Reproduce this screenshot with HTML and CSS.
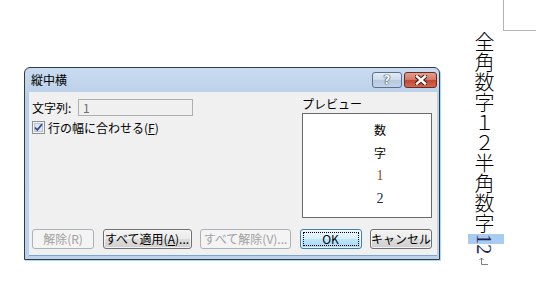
FILE: index.html
```html
<!DOCTYPE html>
<html lang="ja">
<head>
    <meta charset="UTF-8">
    <title>縦中横</title>
    <link rel="stylesheet" href="styles.css">
</head>
<body>
    <div class="doc">
        <div class="column">全角数字１２半角数字<span class="latin"><span class="sel">1</span>2</span><svg class="para" width="10" height="9" viewBox="0 0 10 9"><path d="M2.5 1 V7.5 H9 M0.5 3 L2.5 1 L4.5 3" fill="none" stroke="#808080" stroke-width="1"/></svg></div>
        <div class="corner"></div>
    </div>

    <div class="dialog">
        <div class="titlebar">
            <span class="title">縦中横</span>
            <div class="caption-btns">
                <span class="cap-btn help">?</span>
                <span class="cap-btn close">
                    <svg width="12" height="10" viewBox="0 0 12 10"><path d="M2 1.5 L10 8.5 M10 1.5 L2 8.5" stroke="#4a1410" stroke-width="4.5" stroke-linecap="square"/><path d="M2 1.5 L10 8.5 M10 1.5 L2 8.5" stroke="#fff" stroke-width="2.5" stroke-linecap="square"/></svg>
                </span>
            </div>
        </div>
        <div class="client">
            <div class="main">
                <div class="options">
                    <div class="field-row">
                        <label for="chars">文字列:</label>
                        <input type="text" id="chars" value="1" disabled>
                    </div>
                    <div class="check-row">
                        <svg class="checkbox" width="13" height="13" viewBox="0 0 13 13">
                            <rect x="0.5" y="0.5" width="12" height="12" fill="#f4f4f4" stroke="#8e8f8f"/>
                            <rect x="2.5" y="2.5" width="8" height="8" fill="#dfe5ee" stroke="#b9c3d3"/>
                            <path d="M3 6.5 L5.3 9 L10 3.3" fill="none" stroke="#32478a" stroke-width="1.8"/>
                        </svg>
                        <span>行の幅に合わせる(<u>F</u>)</span>
                    </div>
                </div>
                <div class="preview">
                    <div class="preview-label">プレビュー</div>
                    <div class="preview-box">
                        <div class="preview-col">
                            <span>数</span>
                            <span>字</span>
                            <span class="digit one">1</span>
                            <span class="digit two">2</span>
                        </div>
                    </div>
                </div>
            </div>
            <div class="buttons">
                <span class="btn disabled w-62">解除(R)</span>
                <span class="btn w-89">すべて適用(<u>A</u>)...</span>
                <span class="btn disabled w-91">すべて解除(V)...</span>
                <span class="btn default w-62"><span class="focus">OK</span></span>
                <span class="btn w-62">キャンセル</span>
            </div>
        </div>
    </div>
</body>
</html>
```

FILE: styles.css
```css
body {
    margin: 0;
    width: 536px;
    height: 285px;
    overflow: hidden;
    background: #fff;
    font-family: "Noto Sans CJK JP", sans-serif;
    font-size: 12px;
    color: #000;
}

/* document behind the dialog */
.doc {
    height: 285px;
    display: flex;
    justify-content: flex-end;
    align-items: flex-start;
}
.column {
    writing-mode: vertical-rl;
    height: 254px;
    margin-top: 32px;
    margin-right: 9px;
    font-size: 20px;
    font-weight: 300;
    line-height: 20px;
    letter-spacing: 0.2px;
    white-space: nowrap;
}
.latin {
    font-family: "Liberation Serif", serif;
    font-weight: normal;
    color: #1c2454;
}
.sel {
    background: #aacbf0;
    padding: 0 9px 0 5px;
}
.para {
    margin-top: 3px;
}
.corner {
    width: 32px;
    height: 30px;
    border-left: 1px solid #b4b4b4;
    border-bottom: 1px solid #b4b4b4;
}

/* dialog window */
.dialog {
    position: absolute;
    left: 24px;
    top: 67px;
    width: 416px;
    box-sizing: border-box;
    border: 1px solid #2f3b4a;
    border-radius: 6px 6px 0 0;
    background: linear-gradient(#c9dbef, #b9cfe9 30px, #bdd2ea);
    box-shadow: 1px 1px 0 #a6dbf3;
}
.titlebar {
    height: 24px;
    display: flex;
    justify-content: space-between;
    padding: 0 2px 0 6px;
}
.title {
    line-height: 24px;
    font-size: 12px;
}
.caption-btns {
    display: flex;
    gap: 2px;
    margin-top: 4px;
}
.cap-btn {
    height: 16px;
    box-sizing: border-box;
    border-radius: 3px;
    display: flex;
    align-items: center;
    justify-content: center;
}
.help {
    width: 30px;
    border: 1px solid #5d6f8a;
    background: linear-gradient(#e3ebf5, #ccdaeb 50%, #b7c9df 50%, #c3d3e6);
    color: #fff;
    font-family: "DejaVu Sans", sans-serif;
    font-weight: bold;
    font-size: 12px;
    text-shadow: 0 0 1px #2a3850, 0 0 1px #2a3850, 0 0 1px #2a3850;
}
.close {
    width: 33px;
    border: 1px solid #6d2a24;
    background: linear-gradient(#e2a08f, #d47462 50%, #c2442f 50%, #cc6a52);
}

.client {
    margin: 0 2px 3px 4px;
    padding: 4px 5px 6px 3px;
    background: #f0f0f0;
    border-bottom: 1px solid #7aa6d6;
}
.main {
    display: flex;
    justify-content: space-between;
}
.options {
    padding-top: 3px;
}
.field-row {
    display: flex;
    align-items: center;
    height: 17px;
}
.field-row label {
    width: 46px;
}
.field-row input {
    width: 115px;
    height: 17px;
    box-sizing: border-box;
    border: 1px solid #afafaf;
    background: #f0f0f0;
    color: #6d6d6d;
    font-family: "Noto Sans CJK JP", sans-serif;
    font-size: 12px;
    padding: 0 4px;
}
.check-row {
    display: flex;
    align-items: center;
    gap: 3px;
    height: 13px;
    margin-top: 5px;
}
.preview {
    width: 130px;
}
.preview-label {
    line-height: 15px;
    margin-bottom: 2px;
}
.preview-box {
    height: 105px;
    box-sizing: border-box;
    border: 1px solid #6a6a6a;
    background: #fff;
    padding-top: 4px;
}
.preview-col {
    width: 24px;
    margin-left: 65px;
    display: flex;
    flex-direction: column;
    align-items: center;
    line-height: 23px;
}
.digit {
    font-family: "Liberation Serif", serif;
    font-size: 14px;
}
.one {
    color: #8a4f10;
}
.two {
    color: #1c2a52;
}

/* push buttons */
.buttons {
    display: flex;
    justify-content: space-between;
    margin-top: 11px;
}
.btn {
    height: 20px;
    box-sizing: border-box;
    border: 1px solid #707070;
    border-radius: 3px;
    background: linear-gradient(#f2f2f2, #ebebeb 50%, #dddddd 50%, #cfcfcf);
    box-shadow: inset 0 0 0 1px rgba(255, 255, 255, 0.7);
    display: flex;
    align-items: center;
    justify-content: center;
    white-space: nowrap;
    line-height: 18px;
}
.btn.disabled {
    border-color: #adb2b5;
    background: #f4f4f4;
    box-shadow: none;
    color: #a0a0a0;
}
.btn.default {
    border-color: #3c7fb1;
    background: linear-gradient(#eaf6fd, #d9f0fc 50%, #bee6fd 50%, #a7d9f5);
    padding: 2px;
}
.focus {
    flex: 1;
    align-self: stretch;
    border: 1px dotted #000;
    text-align: center;
    line-height: 12px;
}
.w-62 {
    width: 62px;
}
.w-89 {
    width: 89px;
}
.w-91 {
    width: 91px;
}
```
